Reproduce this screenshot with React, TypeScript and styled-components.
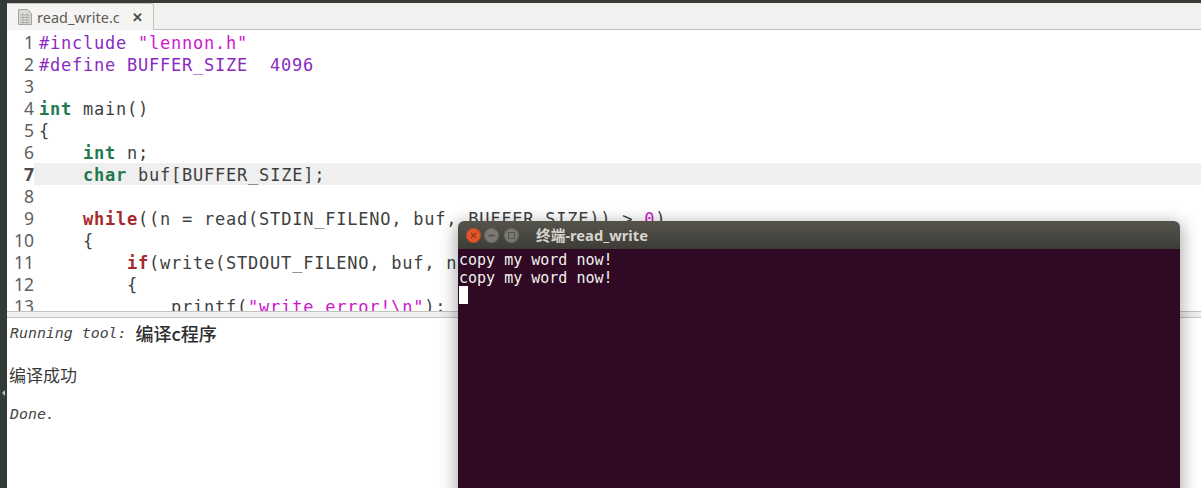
import React from "react";
import styled, { createGlobalStyle } from "styled-components";

const Global = createGlobalStyle`
  html, body { margin: 0; padding: 0; width: 1201px; height: 488px; overflow: hidden; background: #fff; }
`;
const Screen = styled.div`
  position: relative; width: 1201px; height: 488px; display: flex; overflow: hidden; background: #3c3b37;
`;
const SideEdge = styled.div`
  width: 7px; flex: none; background: #333b38; display: flex; align-items: center; justify-content: center; padding-top: 298px; box-sizing: border-box;
`;
const SideArrow = styled.div`
  width: 0; height: 0; border-top: 3px solid transparent; border-bottom: 3px solid transparent; border-right: 3px solid #b9bdb9;
`;
const Main = styled.div`
  flex: 1; min-width: 0; display: flex; flex-direction: column; padding-top: 3px; background: #3c3b37;
`;
const TabBar = styled.div`
  height: 27px; flex: none; background: #f2f1f0; border-bottom: 1px solid #c4c2bf; box-sizing: border-box; display: flex; align-items: flex-end; padding-left: 0;
`;
const Tab = styled.div`
  width: 147px; height: 27px; margin-bottom: -1px; box-sizing: border-box; background: #f5f4f3; border: 1px solid #c4c2bf; border-left: none; border-bottom: none; border-top-right-radius: 3px;
  display: flex; align-items: center; padding-left: 10px; gap: 4px;
`;
const TabName = styled.span`
  font: 14.5px "Noto Sans", "Open Sans", sans-serif; color: #5d5b57; width: 86px; white-space: nowrap;
`;
const TabClose = styled.span`
  font: bold 13px "Liberation Sans", sans-serif; color: #4a4a46; margin-left: 5px; line-height: 1;
`;
const Editor = styled.div`
  height: 281px; flex: none; background: #fff; overflow: hidden; padding-top: 1px; box-sizing: border-box;
`;
const Line = styled.div<{ $current?: boolean }>`
  height: 22px; display: flex; align-items: center; background: ${p => (p.$current ? "#efefef" : "transparent")};
  font: 17px/22px "DejaVu Sans Mono", monospace; letter-spacing: 0.77px; color: #3f3f3f; white-space: pre;
  position: relative;
`;
const Num = styled.span<{ $current?: boolean }>`
  width: 27px; flex: none; margin-right: 5px; text-align: right; letter-spacing: 0; font: ${p => (p.$current ? "bold " : "")}17.5px/23px "Noto Sans", sans-serif; color: ${p => (p.$current ? "#4a4a4a" : "#5f5f5f")}; background: #fff; align-self: stretch;
`;
const CodeText = styled.span`
  padding-top: 2px;
`;
const Pre = styled.span`color: #8a2bbf;`;
const Str = styled.span`color: #cc16cc;`;
const Kw = styled.span`color: #23794f; font-weight: bold;`;
const Ctl = styled.span`color: #a52a2a; font-weight: bold;`;
const Divider = styled.div`
  height: 7px; flex: none; background: #f0efee; border-top: 1px solid #c4c2bf; border-bottom: 1px solid #c4c2bf; box-sizing: border-box;
`;
const Output = styled.div`
  flex: 1; background: #fff; padding: 4px 0 0 3px; color: #3a3a3a;
`;
const OutLine = styled.div`
  height: 21px; display: flex; align-items: center; white-space: pre;
`;
const Spacer = styled.div<{ $h: number }>`height: ${p => p.$h}px;`;
const Ital = styled.span`
  font: italic 14.9px "DejaVu Sans Mono", monospace; color: #454545;
`;
const ZhTool = styled.span`
  font: 500 18px "Noto Sans CJK SC", sans-serif; color: #2e2e2e;
`;
const ZhResult = styled.span`
  font: normal 17px "Noto Sans CJK SC", sans-serif; margin-left: -1px;
`;
const Win = styled.div`
  position: absolute; left: 458px; top: 221px; width: 722px; height: 290px; border-radius: 6px 6px 0 0; overflow: hidden;
`;
const WinShadow = styled.div`
  position: absolute; left: 458px; top: 221px; width: 722px; height: 290px; border-radius: 6px 6px 0 0;
  box-shadow: 0 4px 16px 3px rgba(0,0,0,0.3);
`;
const TitleBar = styled.div`
  height: 28px; background: linear-gradient(#55534c, #3d3c37); display: flex; align-items: center; padding-left: 8px; box-sizing: border-box;
`;
const Btn = styled.div<{ $c: string; $gap: number }>`
  width: 15px; height: 15px; border-radius: 50%; background: ${p => p.$c}; margin-right: ${p => p.$gap}px; flex: none; display: flex; align-items: center; justify-content: center; box-shadow: inset 0 0 0 1px rgba(0,0,0,.15);
`;
const Title = styled.div`
  margin: -1px 0 0 14px; font: bold 14.7px "Noto Sans", "Noto Sans CJK SC", sans-serif; color: #d8d5cc; white-space: nowrap;
`;
const Term = styled.div`
  height: 262px; background: #300a24; padding: 2px 0 0 1px; box-sizing: border-box; font: 15px/18px "DejaVu Sans Mono", monospace; color: #f2f2ee; white-space: pre;
`;
const Cursor = styled.div`
  width: 9px; height: 18px; margin-top: -1px; background: #fff;
`;

const code: React.ReactNode[] = [
  <><Pre>#include </Pre><Str>"lennon.h"</Str></>,
  <><Pre>#define BUFFER_SIZE  </Pre><Pre>4096</Pre></>,
  <></>,
  <><Kw>int</Kw> main()</>,
  <>{"{"}</>,
  <>{"    "}<Kw>int</Kw> n;</>,
  <>{"    "}<Kw>char</Kw> buf[BUFFER_SIZE];</>,
  <></>,
  <>{"    "}<Ctl>while</Ctl>((n = read(STDIN_FILENO, buf, BUFFER_SIZE)) &gt; <Str>0</Str>)</>,
  <>{"    {"}</>,
  <>{"        "}<Ctl>if</Ctl>(write(STDOUT_FILENO, buf, n) != n)</>,
  <>{"        {"}</>,
  <>{"            "}printf(<Str>"write error!\n"</Str>);</>,
];

export default function App() {
  return (
    <Screen>
      <Global />
      <SideEdge><SideArrow /></SideEdge>
      <Main>
        <TabBar>
          <Tab>
            <svg width="16" height="18" viewBox="0 0 16 18">
              <path d="M1.5 1.5h9l4 4v11h-13z" fill="#dcdad6" stroke="#a5a39f" />
              <path d="M3 7h10M3 9.5h10M3 12h10M3 14.5h10M6 5v11M10 5v11" stroke="#b3b1ad" strokeWidth="1" />
            </svg>
            <TabName>read_write.c</TabName>
            <TabClose>✕</TabClose>
          </Tab>
        </TabBar>
        <Editor>
          {code.map((c, i) => (
            <Line key={i} $current={i === 6}>
              <Num $current={i === 6}>{i + 1}</Num>
              <CodeText>{c}</CodeText>
            </Line>
          ))}
        </Editor>
        <Divider />
        <Output>
          <OutLine><Ital>Running tool: </Ital><ZhTool>编译c程序</ZhTool></OutLine>
          <Spacer $h={21} />
          <OutLine><ZhResult>编译成功</ZhResult></OutLine>
          <Spacer $h={18} />
          <OutLine><Ital>Done.</Ital></OutLine>
        </Output>
      </Main>
      <WinShadow />
      <Win>
        <TitleBar>
          <Btn $c="#e2572a" $gap={3}>
            <svg width="9" height="9" viewBox="0 0 9 9"><path d="M2 2l5 5M7 2l-5 5" stroke="#96391a" strokeWidth="1.3" /></svg>
          </Btn>
          <Btn $c="#7b7a72" $gap={5}>
            <svg width="9" height="9" viewBox="0 0 9 9"><path d="M1.5 4.5h6" stroke="#4a4943" strokeWidth="1.3" /></svg>
          </Btn>
          <Btn $c="#7b7a72" $gap={3}>
            <svg width="9" height="9" viewBox="0 0 9 9"><rect x="1.5" y="1.5" width="6" height="6" fill="none" stroke="#56554e" strokeWidth="1.1" /></svg>
          </Btn>
          <Title>终端-read_write</Title>
        </TitleBar>
        <Term>
          {"copy my word now!\ncopy my word now!\n"}
          <Cursor />
        </Term>
      </Win>
    </Screen>
  );
}
